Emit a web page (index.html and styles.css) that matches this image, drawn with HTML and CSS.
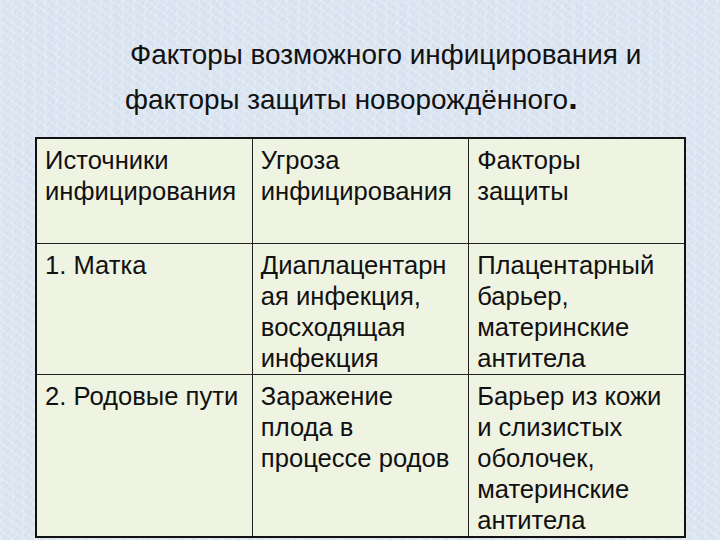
FILE: index.html
```html
<!DOCTYPE html>
<html lang="ru">
<head>
<meta charset="utf-8">
<link rel="stylesheet" href="styles.css">
</head>
<body>
<div class="slide">
  <div class="title">
    <div class="title-line first">Факторы возможного инфицирования и</div>
    <div class="title-line">факторы защиты новорождённого<span class="dot">.</span></div>
  </div>
  <table class="grid">
    <tr class="head">
      <td>Источники<br>инфицирования</td>
      <td>Угроза<br>инфицирования</td>
      <td>Факторы<br>защиты</td>
    </tr>
    <tr class="row1">
      <td>1. Матка</td>
      <td>Диаплацентарн<br>ая инфекция,<br>восходящая<br>инфекция</td>
      <td>Плацентарный<br>барьер,<br>материнские<br>антитела</td>
    </tr>
    <tr class="row2">
      <td>2. Родовые пути</td>
      <td>Заражение<br>плода в<br>процессе родов</td>
      <td>Барьер из кожи<br>и слизистых<br>оболочек,<br>материнские<br>антитела</td>
    </tr>
  </table>
</div>
</body>
</html>
```
FILE: styles.css
```css
html, body {
  margin: 0;
  padding: 0;
}
body {
  width: 720px;
  height: 540px;
  overflow: hidden;
  font-family: "Liberation Sans", Arial, sans-serif;
  color: #111;
  background-color: #dbe5f2;
  background-image:
    repeating-linear-gradient(37deg, rgba(255,255,255,0.18) 0 2px, rgba(255,255,255,0) 2px 7px),
    repeating-linear-gradient(-52deg, rgba(160,180,210,0.12) 0 1px, rgba(160,180,210,0) 1px 5px),
    repeating-linear-gradient(90deg, rgba(255,255,255,0.10) 0 3px, rgba(255,255,255,0) 3px 11px);
}
.slide {
  padding: 34px 0 0 35px;
}
.title {
  padding-left: 90px;
  font-size: 27.9px;
  line-height: 42px;
  height: 103px;
}
.title-line.first {
  padding-left: 5px;
}
.dot {
  font-size: 34px;
  font-weight: bold;
}
.grid {
  border-collapse: collapse;
  width: 651px;
  table-layout: fixed;
  background: #eff3e2;
  border: 2px solid #111;
  font-size: 25.6px;
  line-height: 31px;
}
.grid td {
  border-left: 1px solid #222;
  border-right: 1px solid #222;
  padding: 6px 4px 0 8px;
  vertical-align: top;
  white-space: nowrap;
}
.head td {
  height: 98px;
  border-bottom: 1px solid #222;
}
.row1 td {
  height: 124px;
  border-bottom: 1px solid #222;
}
.row2 td {
  height: 155px;
}
```
